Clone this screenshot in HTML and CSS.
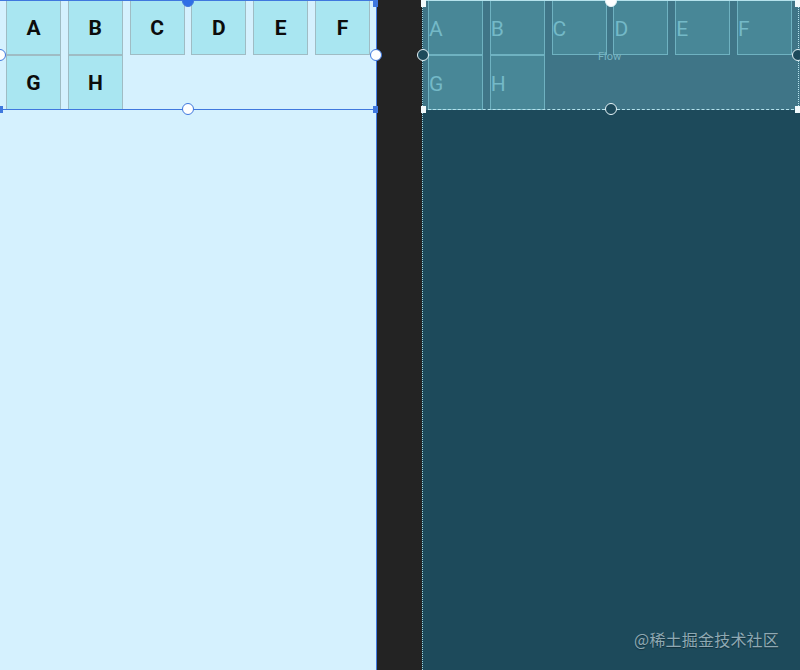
FILE: index.html
```html
<!DOCTYPE html>
<html>
<head>
<meta charset="utf-8">
<link rel="stylesheet" href="styles.css">
</head>
<body>
<div class="screen">
  <div class="panel design">
    <div class="flow">
      <div class="box">A</div>
      <div class="box">B</div>
      <div class="box">C</div>
      <div class="box">D</div>
      <div class="box">E</div>
      <div class="box">F</div>
      <div class="box">G</div>
      <div class="box">H</div>
      <div class="frame">
        <span class="handle fill top"></span>
        <span class="handle left"></span>
        <span class="handle right"></span>
        <span class="handle bottom"></span>
        <span class="sq tr"></span>
        <span class="sq bl"></span>
        <span class="sq br"></span>
      </div>
    </div>
  </div>
  <div class="divider"></div>
  <div class="panel blueprint">
    <div class="flow">
      <div class="box">A</div>
      <div class="box">B</div>
      <div class="box">C</div>
      <div class="box">D</div>
      <div class="box">E</div>
      <div class="box">F</div>
      <div class="box">G</div>
      <div class="box">H</div>
      <span class="flow-label">Flow</span>
      <div class="frame">
        <span class="handle fill top"></span>
        <span class="handle left"></span>
        <span class="handle right"></span>
        <span class="handle bottom"></span>
        <span class="sq tl"></span>
        <span class="sq tr"></span>
        <span class="sq bl"></span>
        <span class="sq br"></span>
      </div>
    </div>
    <div class="watermark">@稀土掘金技术社区</div>
  </div>
</div>
</body>
</html>
```

FILE: styles.css
```css
html, body {
  margin: 0;
  padding: 0;
  width: 800px;
  height: 670px;
  overflow: hidden;
  background: #232323;
}

.screen {
  display: flex;
  width: 800px;
  height: 670px;
}

.panel {
  position: relative;
  height: 670px;
  box-sizing: border-box;
}

.design {
  width: 377px;
  background: #d5f1fe;
  border-right: 1px solid #3f78de;
}

.divider {
  width: 45px;
  background: #232323;
}

.blueprint {
  width: 378px;
  background: #1d4a5b;
  border-left: 1px dotted #9fd3df;
}

.flow {
  position: relative;
  height: 110px;
  box-sizing: border-box;
  padding-left: 6px;
  display: flex;
  flex-wrap: wrap;
  align-content: flex-start;
  column-gap: 6.8px;
  row-gap: 0;
}

.box {
  width: 55px;
  height: 55px;
  box-sizing: border-box;
  font-family: Roboto, "Liberation Sans", sans-serif;
  font-size: 21px;
  line-height: 55px;
}

.design .box {
  background: #a9e6f1;
  border: 1px solid #9fbcc4;
  color: #0c0c0c;
  font-weight: 700;
  text-align: center;
}

.blueprint .flow {
  background: #3f7587;
  padding-left: 5px;
}

.blueprint .box {
  background: #488797;
  border: 1px solid #6fb2c1;
  color: #74b9c7;
  font-weight: 400;
  padding-left: 0;
  line-height: 56px;
}

.flow-label {
  position: absolute;
  left: 175px;
  top: 50px;
  font-family: Roboto, "Liberation Sans", sans-serif;
  font-size: 11px;
  color: #78b4c2;
}

.frame {
  position: absolute;
  left: 0;
  top: 0;
  right: 0;
  height: 110px;
  box-sizing: border-box;
  pointer-events: none;
}

.design .frame {
  border-top: 1px solid #3f78de;
  border-bottom: 1px solid #3f78de;
}

.blueprint .frame {
  border-top: 1px solid #b5e2ec;
  border-bottom: 1px dashed #b5e2ec;
  border-right: 1px dotted #b5e2ec;
  right: 1px;
}

.handle {
  position: absolute;
  width: 12px;
  height: 12px;
  border-radius: 50%;
  box-sizing: border-box;
  border: 1.5px solid #3f78de;
  background: #ffffff;
}

.design .handle.fill {
  background: #2f6fe6;
}

.blueprint .handle {
  border: 1.5px solid #e6f4f8;
  background: #1d4a5b;
}

.blueprint .handle.fill {
  background: #ffffff;
}

.handle.top { left: 50%; top: -6px; transform: translateX(-50%); }
.handle.left { left: -6px; top: 50%; transform: translateY(-50%); }
.handle.right { right: -6px; top: 50%; transform: translateY(-50%); }
.handle.bottom { left: 50%; bottom: -6px; transform: translateX(-50%); }

.sq {
  position: absolute;
  width: 5px;
  height: 7px;
  background: #3f78de;
}

.blueprint .sq {
  background: #f2fafc;
}

.sq.tl { left: -2px; top: -1px; }
.sq.tr { right: -2px; top: -1px; }
.sq.bl { left: -2px; bottom: -4px; }
.sq.br { right: -2px; bottom: -4px; }

.watermark {
  position: absolute;
  right: 21px;
  top: 627px;
  font-family: "Noto Sans CJK SC", sans-serif;
  font-size: 16px;
  color: #8fa9b3;
  text-shadow: 0 1px 1px rgba(0, 0, 0, 0.35);
  letter-spacing: 0.2px;
}
```
